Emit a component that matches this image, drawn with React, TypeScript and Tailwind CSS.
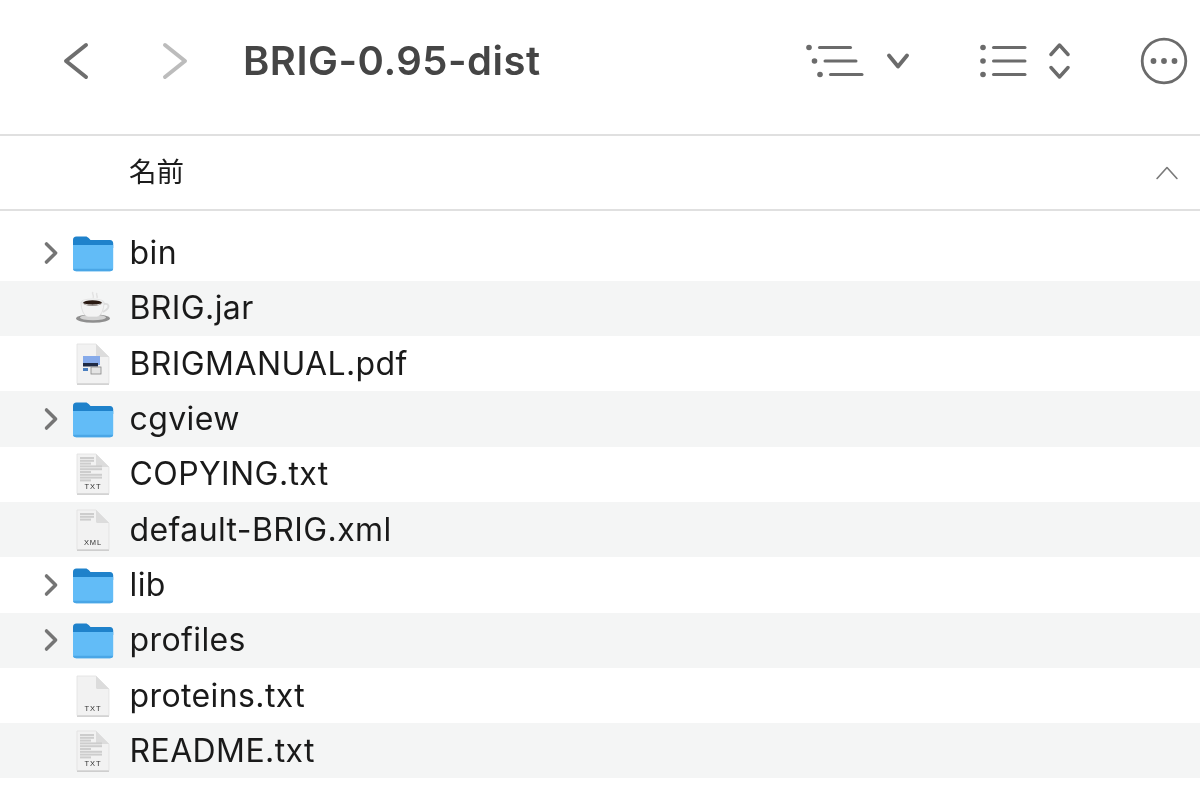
import type { ReactNode } from "react";

type Kind = "folder" | "jar" | "pdf" | "txt" | "txtBlank" | "xml";

const files: { name: string; kind: Kind }[] = [
  { name: "bin", kind: "folder" },
  { name: "BRIG.jar", kind: "jar" },
  { name: "BRIGMANUAL.pdf", kind: "pdf" },
  { name: "cgview", kind: "folder" },
  { name: "COPYING.txt", kind: "txt" },
  { name: "default-BRIG.xml", kind: "xml" },
  { name: "lib", kind: "folder" },
  { name: "profiles", kind: "folder" },
  { name: "proteins.txt", kind: "txtBlank" },
  { name: "README.txt", kind: "txt" },
];

function FolderIcon() {
  return (
    <svg width="42" height="38" viewBox="0 0 42 38" className="block">
      <path d="M1 6c0-2 1.200-3.500 3.500-3.500h9c1.500 0 2.200.5 3.200 1.600L18.500 6H38c2 0 3.200 1.300 3.200 3.200V14H1z" fill="#1f82cb" />
      <path d="M1 11h40.200V34c0 2-1.300 3.300-3.300 3.300H4.300C2.300 37.300 1 36 1 34z" fill="#62bcf7" />
      <path d="M1 34.800c0 1.500 1.300 2.500 3.300 2.500h33.600c2 0 3.300-1 3.300-2.500z" fill="#4aa6e6" />
    </svg>
  );
}

function Doc({ label, children }: { label?: string; children?: ReactNode }) {
  return (
    <svg width="36" height="44" viewBox="0 0 36 44" className="block">
      <path d="M2 3h19l13 13v26.500H2z" fill="#a8a8a8" />
      <path d="M2 2h19l13 13v26.500H2z" fill="#f2f2f2" stroke="#dedede" strokeWidth="0.700" />
      <path d="M21 2l13 13H22.500c-1 0-1.500-.6-1.500-1.500z" fill="#dcdcdc" />
      {children}
      {label && (
        <text x="18" y="37" textAnchor="middle" fontSize="7.500" fontFamily="Liberation Sans, sans-serif" fill="#333" letterSpacing="0.900">
          {label}
        </text>
      )}
    </svg>
  );
}

function TextLines({ rows }: { rows: number }) {
  return (
    <g fill="#cdcdcd">
      {Array.from({ length: rows }).map((_, i) => (
        <rect key={i} x="5" y={5 + i * 2.800} width={i % 3 === 2 ? 11 : i < 3 ? 14 : 22} height="2" />
      ))}
    </g>
  );
}

function JarIcon() {
  return (
    <svg width="40" height="34" viewBox="0 0 40 34" className="block">
      <path d="M20 1c-2 2 2 3 0 6M24 2c-1.500 2 1 3 0 5" stroke="#e2e2e2" strokeWidth="1.500" fill="none" />
      <ellipse cx="20" cy="27.500" rx="17" ry="4.200" fill="#8f8f8f" />
      <ellipse cx="20" cy="26.500" rx="13" ry="2.800" fill="#d4d4d4" />
      <path d="M8 11h23c0 8-3 14-7 15H15c-4-1-7-7-7-15z" fill="#f3f3f3" stroke="#d2d2d2" strokeWidth="0.600" />
      <path d="M31 13c5-1 6 3 2 6l-3 2" stroke="#dddddd" strokeWidth="1.800" fill="none" />
      <ellipse cx="19.500" cy="12" rx="9.500" ry="2.800" fill="#2a1a12" />
      <ellipse cx="19.500" cy="11" rx="11.500" ry="3" fill="none" stroke="#e4e4e4" strokeWidth="0.900" />
    </svg>
  );
}

function FileIcon({ kind }: { kind: Kind }) {
  if (kind === "folder") return <FolderIcon />;
  if (kind === "jar") return <JarIcon />;
  if (kind === "pdf")
    return (
      <Doc>
        <rect x="8" y="14" width="17" height="9" fill="#86aaea" />
        <rect x="8" y="21" width="15" height="3.500" fill="#1f2a44" />
        <rect x="8" y="26" width="5" height="3" fill="#4a7fc0" />
        <rect x="16" y="25" width="10" height="7" fill="#e4e4e4" stroke="#888" strokeWidth="0.800" />
      </Doc>
    );
  if (kind === "xml")
    return (
      <Doc label="XML">
        <TextLines rows={3} />
      </Doc>
    );
  if (kind === "txtBlank") return <Doc label="TXT" />;
  return (
    <Doc label="TXT">
      <TextLines rows={9} />
    </Doc>
  );
}

function Chevron({ d, className, width = 4 }: { d: string; className: string; width?: number }) {
  return (
    <svg viewBox="0 0 40 40" className={className} fill="none" stroke="currentColor" strokeWidth={width} strokeLinecap="round" strokeLinejoin="round">
      <path d={d} />
    </svg>
  );
}

function OutlineIcon() {
  return (
    <svg width="58" height="34" viewBox="0 0 58 34" className="block text-[#6b6b6b]" fill="currentColor">
      <circle cx="3" cy="3.500" r="2.800" />
      <circle cx="8.500" cy="17" r="2.800" />
      <circle cx="14" cy="30.500" r="2.800" />
      <rect x="12" y="2" width="34" height="3" rx="1.500" />
      <rect x="17.500" y="15.500" width="34" height="3" rx="1.500" />
      <rect x="23" y="29" width="34.500" height="3" rx="1.500" />
    </svg>
  );
}

function ListIcon() {
  return (
    <svg width="47" height="34" viewBox="0 0 47 34" className="block text-[#6b6b6b]" fill="currentColor">
      <circle cx="3" cy="3.500" r="2.800" />
      <circle cx="3" cy="17" r="2.800" />
      <circle cx="3" cy="30.500" r="2.800" />
      <rect x="12" y="2" width="34.500" height="3" rx="1.500" />
      <rect x="12" y="15.500" width="34.500" height="3" rx="1.500" />
      <rect x="12" y="29" width="34.500" height="3" rx="1.500" />
    </svg>
  );
}

function UpDownIcon() {
  return (
    <svg width="21" height="36" viewBox="0 0 21 36" className="block text-[#6b6b6b]" fill="none" stroke="currentColor" strokeWidth="3.400" strokeLinecap="round" strokeLinejoin="round">
      <path d="M2 11.500 L10.500 2 L19 11.500" />
      <path d="M2 24.500 L10.500 34 L19 24.500" />
    </svg>
  );
}

function MoreIcon() {
  return (
    <svg width="48" height="48" viewBox="0 0 48 48" className="block text-[#6b6b6b]">
      <circle cx="24" cy="24" r="21.800" fill="none" stroke="currentColor" strokeWidth="2.800" />
      <circle cx="13.500" cy="24" r="2.900" fill="currentColor" />
      <circle cx="24" cy="24" r="2.900" fill="currentColor" />
      <circle cx="34.500" cy="24" r="2.900" fill="currentColor" />
    </svg>
  );
}

export default function App() {
  return (
    <div className="h-[807px] w-[1200px] overflow-hidden bg-white font-['Inter','Noto_Sans_CJK_JP',sans-serif] text-[#1a1a1a] blur-[0.4px]">
      <div className="flex h-[136px] items-center border-b-2 border-[#e0e0e0] pb-[13px]">
        <Chevron d="M30 4 L10 20 L30 36" className="ml-[56px] h-[40px] w-[40px] text-[#6e6e6e]" />
        <Chevron d="M10 4 L30 20 L10 36" className="ml-[59px] h-[40px] w-[40px] text-[#bcbcbc]" />
        <h1 className="ml-[48px] text-[40px] leading-none font-semibold tracking-[0.500px] text-[#454545]">BRIG-0.95-dist</h1>
        <div className="ml-auto flex items-center pr-[12px]">
          <OutlineIcon />
          <div className="ml-[22px]">
            <Chevron d="M5 11 L20 29 L35 11" className="h-[24px] w-[24px] text-[#6b6b6b]" width={6.500} />
          </div>
          <div className="ml-[70px]">
            <ListIcon />
          </div>
          <div className="ml-[22px]">
            <UpDownIcon />
          </div>
          <div className="ml-[70px]">
            <MoreIcon />
          </div>
        </div>
      </div>
      <div className="flex h-[75px] items-center justify-between border-b-2 border-[#e0e0e0] pl-[129px] pr-[22px]">
        <span className="text-[27.500px] leading-none text-[#1c1c1c]">名前</span>
        <Chevron d="M2 30 L20 10 L38 30" className="h-[22px] w-[22px] text-[#7a7a7a]" width={3} />
      </div>
      <div className="pt-[14.500px]">
        {files.map((file, i) => (
          <div key={file.name} className={`flex h-[55.300px] items-center ${i % 2 === 1 ? "bg-[#f4f5f5]" : "bg-white"}`}>
            <div className="flex w-[72px] justify-end pr-[8px]">
              {file.kind === "folder" && <Chevron d="M15 7 L28 20 L15 33" className="h-[28px] w-[28px] text-[#757575]" width={5} />}
            </div>
            <div className="flex w-[42px] justify-center">
              <FileIcon kind={file.kind} />
            </div>
            <span className="ml-[15.500px] text-[32px] leading-none tracking-[0.400px]">{file.name}</span>
          </div>
        ))}
      </div>
    </div>
  );
}
